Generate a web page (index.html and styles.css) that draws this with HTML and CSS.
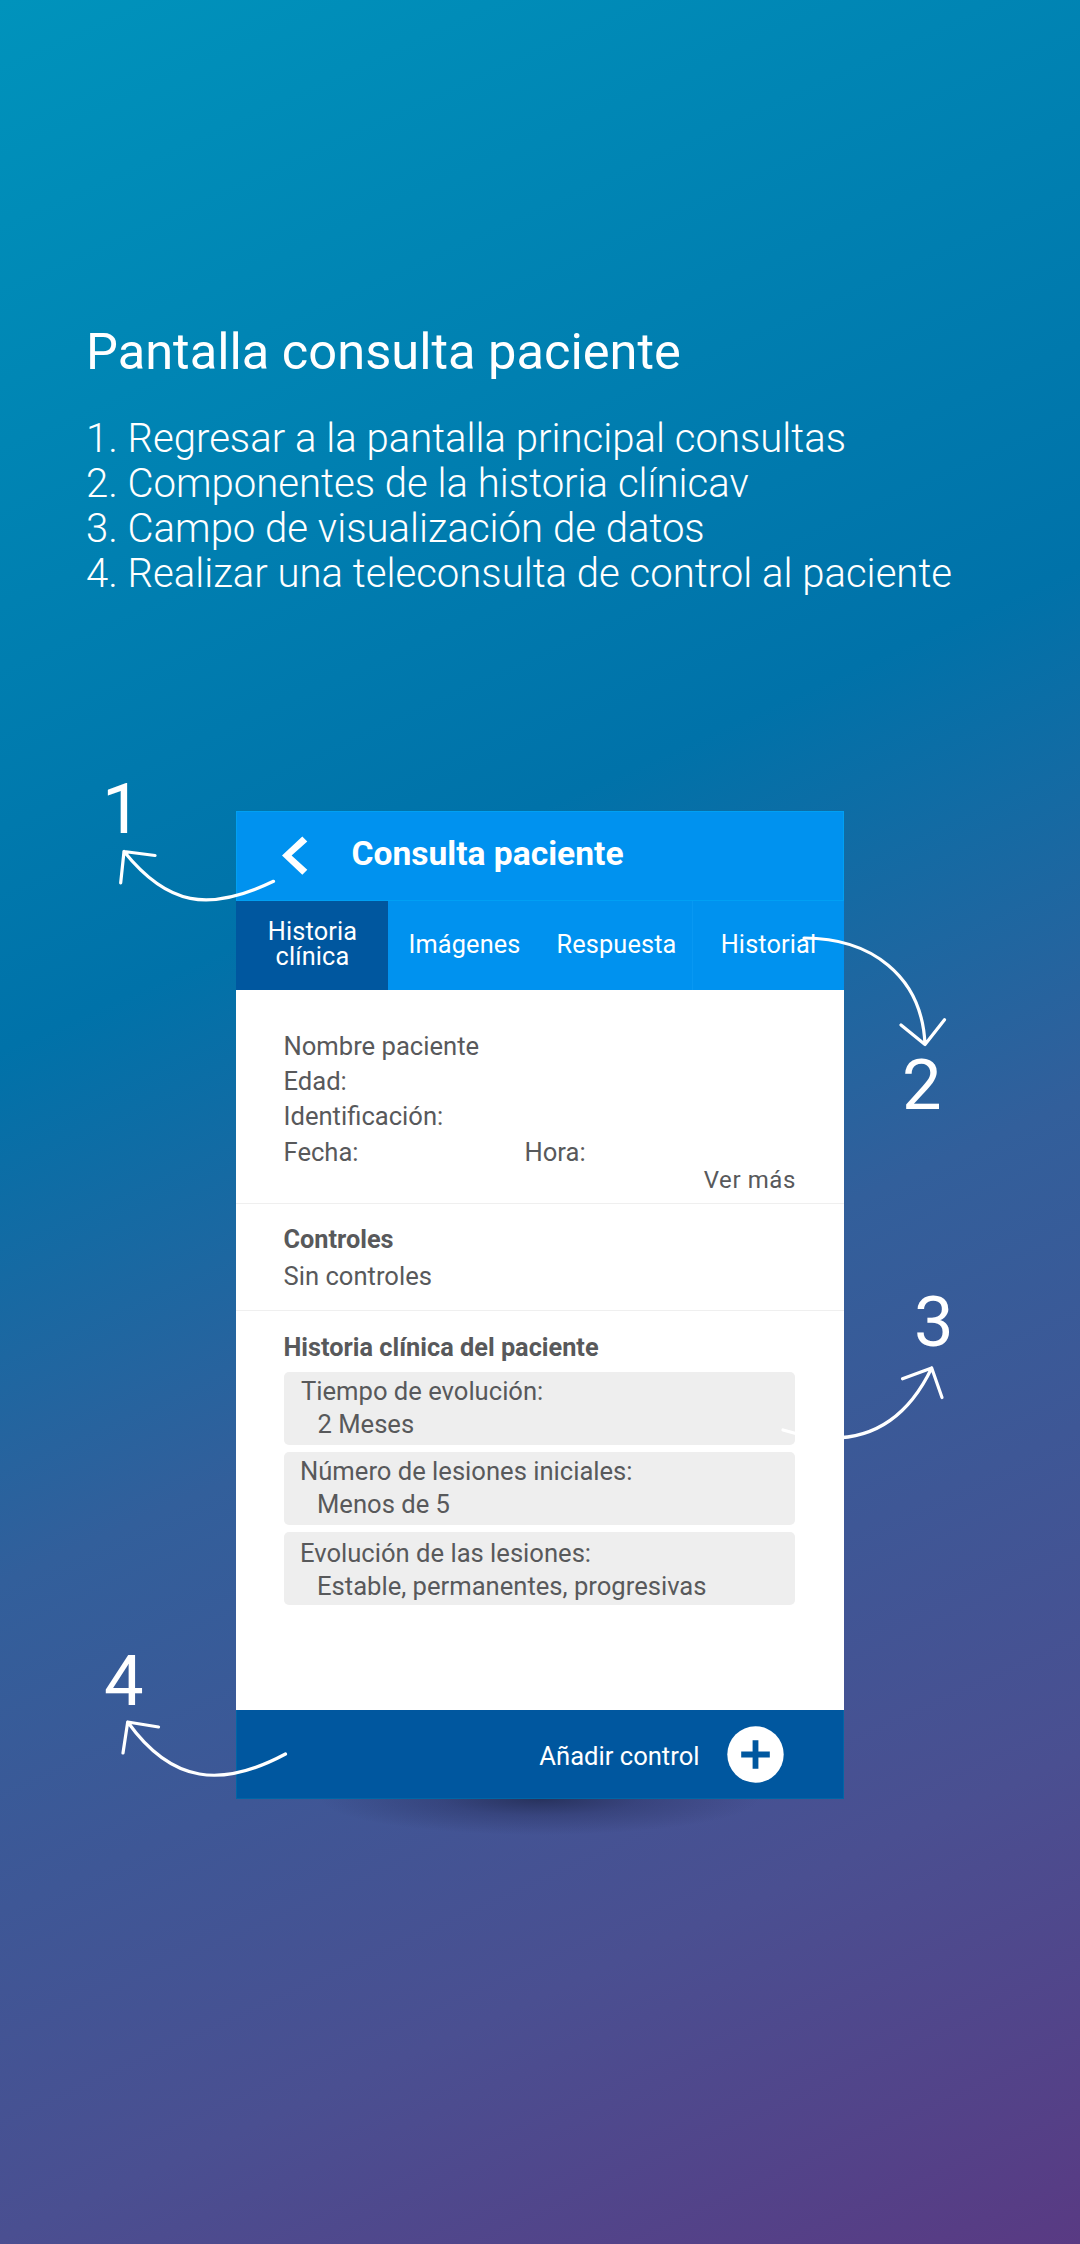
FILE: index.html
```html
<!DOCTYPE html>
<html lang="es">
<head>
<meta charset="utf-8">
<title>Pantalla consulta paciente</title>
<link rel="stylesheet" href="styles.css">
</head>
<body>
<main class="page">
  <h1 class="title">Pantalla consulta paciente</h1>
  <div class="steps">
    <div>1. Regresar a la pantalla principal consultas</div>
    <div>2. Componentes de la historia clínicav</div>
    <div>3. Campo de visualización de datos</div>
    <div>4. Realizar una teleconsulta de control al paciente</div>
  </div>

  <div class="phone">
    <header class="bar">
      <svg class="back" width="26" height="40" viewBox="0 0 26 40"><path d="M20.3 0.5 25.3 5.5 9.6 19.6 25.3 33.8 20.3 38.8 0 19.6Z" fill="#fff"/></svg>
      <span class="bar-title">Consulta paciente</span>
    </header>
    <nav class="tabs">
      <div class="tab active">Historia<br>clínica</div>
      <div class="tab">Imágenes</div>
      <div class="tab">Respuesta</div>
      <div class="tab last">Historial</div>
    </nav>
    <section class="block patient">
      <div>Nombre paciente</div>
      <div>Edad:</div>
      <div>Identificación:</div>
      <div class="pair"><span>Fecha:</span><span>Hora:</span></div>
      <div class="more">Ver más</div>
    </section>
    <section class="block controls">
      <strong>Controles</strong>
      <div>Sin controles</div>
    </section>
    <section class="block history">
      <strong>Historia clínica del paciente</strong>
      <div class="cards">
        <div class="card first"><div>Tiempo de evolución:</div><div class="value">2 Meses</div></div>
        <div class="card second"><div>Número de lesiones iniciales:</div><div class="value">Menos de 5</div></div>
        <div class="card third"><div>Evolución de las lesiones:</div><div class="value">Estable, permanentes, progresivas</div></div>
      </div>
    </section>
    <footer class="foot">
      <span class="add">Añadir control</span>
      <svg width="57" height="57" viewBox="0 0 57 57"><circle cx="28.5" cy="28.5" r="28.2" fill="#fff"/><path d="M28.5 14.2V42.8M14.2 28.5H42.8" stroke="#00579f" stroke-width="5.8"/></svg>
    </footer>
  </div>

  <svg class="arrows" width="1080" height="2244" viewBox="0 0 1080 2244">
    <path d="M273.5 881.3C208 913 167 905 124 851.5M155 855.5 124 851.5 120.7 882.8"/>
    <path d="M804 938C870 938 922 975 925 1044.5M901 1025 925 1044.5 944.5 1019.7"/>
    <path d="M783 1430C848 1450 900 1434 931.7 1368M902.5 1378.8 931.7 1368 942 1397.5"/>
    <path d="M285.5 1754C222 1788 172 1784 127.7 1722M158.5 1727 127.7 1722 123 1753"/>
  </svg>
  <span class="num n1">1</span>
  <span class="num n2">2</span>
  <span class="num n3">3</span>
  <span class="num n4">4</span>
</main>
</body>
</html>
```
FILE: styles.css
```css
* { box-sizing: border-box; }

body {
  margin: 0;
  font-family: Roboto, sans-serif;
  color: #fff;
}

.page {
  position: relative;
  width: 1080px;
  height: 2244px;
  padding-top: 322px;
  overflow: hidden;
  background: linear-gradient(155.8deg, #0093bc 0%, #0072a9 38.5%, #325f9b 58%, #4a4f91 82%, #593a83 100%);
}

.title {
  margin: 0 0 34px 86px;
  font-size: 50.6px;
  font-weight: 400;
  line-height: 60px;
}

.steps {
  margin-left: 86px;
  font-size: 40.1px;
  font-weight: 300;
  line-height: 45px;
  white-space: nowrap;
}

.phone {
  position: relative;
  width: 608px;
  margin: 215px 0 0 236px;
  background: #fff;
}

/* Soft elliptical shadow under the footer */
.phone::after {
  content: "";
  position: absolute;
  left: 84px;
  right: 84px;
  top: 988px;
  height: 36px;
  background: radial-gradient(ellipse 50% 100% at 50% 0, rgba(28, 36, 70, .7), rgba(34, 40, 84, .35) 45%, rgba(60, 66, 120, 0));
}

.bar {
  display: flex;
  align-items: center;
  height: 90px;
  padding: 0 0 0 44.5px;
  background: #0092ef;
  border: 1px solid #00a0f4;
}

.back { margin-top: 0; }

.bar-title {
  margin: -5px 0 0 44px;
  font-size: 33.6px;
  font-weight: 700;
}

.tabs {
  display: grid;
  grid-template-columns: repeat(4, 1fr);
  height: 89px;
  background: #0092ef;
}

.tab {
  display: flex;
  align-items: center;
  justify-content: center;
  padding: 0 0 3px 1px;
  font-size: 25.3px;
  line-height: 25px;
  letter-spacing: .15px;
  text-align: center;
}

.tab.active { background: #00579f; }

.tab.last {
  padding-left: 0;
  border-left: 1px solid #0898f2;
}

.block {
  padding: 0 48px 0 47.5px;
  color: #58595b;
  font-size: 25.6px;
}

.patient {
  height: 214px;
  padding-top: 38.8px;
  line-height: 35.3px;
  border-bottom: 1px solid #efefef;
}

.pair {
  display: grid;
  grid-template-columns: 241px 1fr;
}

.more {
  margin-top: -5px;
  font-size: 24px;
  line-height: 30px;
  letter-spacing: .6px;
  text-align: right;
}

.controls {
  height: 107px;
  padding-top: 17px;
  line-height: 36px;
  border-bottom: 1px solid #efefef;
}

.history {
  height: 399px;
  padding-top: 18px;
  line-height: 36px;
}

.controls strong, .history strong { font-size: 25.3px; }

.cards {
  display: flex;
  flex-direction: column;
  gap: 7.6px;
  margin: 6px 1px 0 .5px;
}

.card {
  height: 72.5px;
  padding-left: 16px;
  border-radius: 5px;
  background: #eee;
  line-height: 33px;
}

.first { padding-top: 3px; padding-left: 17px; }
.second { padding-top: 3px; }
.third { padding-top: 4.5px; }
.value { padding-left: 17px; }
.first .value { padding-left: 16.5px; }

.foot {
  display: flex;
  align-items: center;
  justify-content: flex-end;
  gap: 27px;
  height: 89px;
  padding-right: 59.5px;
  background: #00579f;
  border: 1px solid #0066a6;
  border-top: 0;
}

.add {
  padding-top: 3px;
  font-size: 25.6px;
}

/* Callout arrows and numbers lie over the illustration */
.arrows {
  position: absolute;
  left: 0;
  top: 0;
  fill: none;
  stroke: #fff;
  stroke-width: 3.2;
  stroke-linecap: round;
  stroke-linejoin: round;
}

.num {
  position: absolute;
  font-size: 70.5px;
  line-height: 80px;
}

.n1 { left: 102px; top: 769px; }
.n2 { left: 902px; top: 1045px; }
.n3 { left: 914px; top: 1282px; }
.n4 { left: 104px; top: 1641px; }
```
